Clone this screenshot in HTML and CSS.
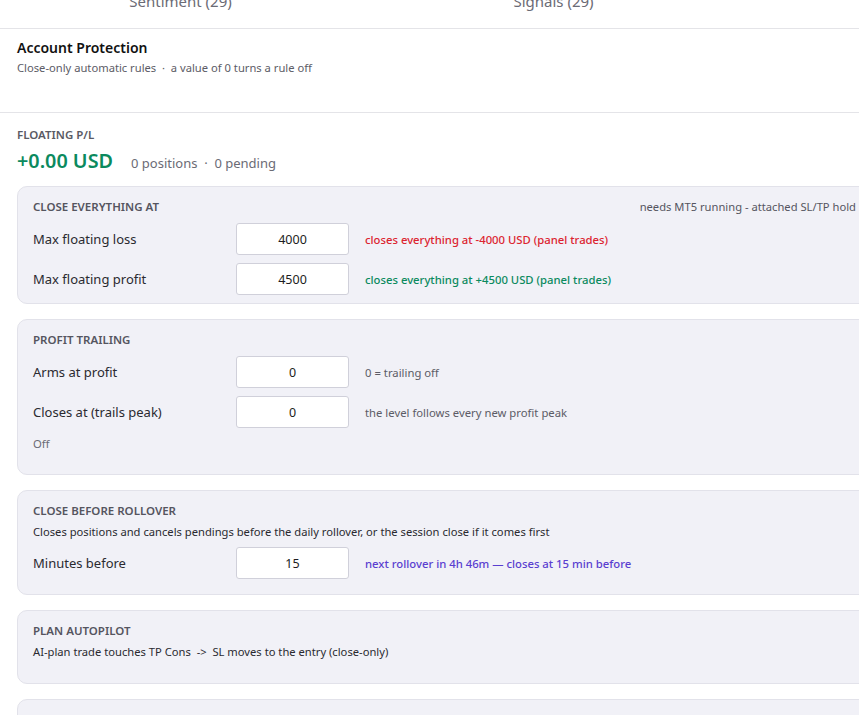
FILE: index.html
```html
<!DOCTYPE html>
<html lang="en">
<head>
	<meta charset="UTF-8">
	<title>Account Protection</title>
	<link rel="stylesheet" href="styles.css">
</head>
<body>
<div class="page">
	<div class="tabs">
		<span class="tab">Sentiment (29)</span>
		<span class="tab">Signals (29)</span>
	</div>

	<div class="head">
		<h2 class="head-tit">Account Protection</h2>
		<p class="head-sub">Close-only automatic rules &nbsp;&middot;&nbsp; a value of 0 turns a rule off</p>
	</div>

	<div class="body">
		<div class="lbl">FLOATING P/L</div>
		<div class="pl">
			<span class="pl-val">+0.00 USD</span>
			<span class="pl-meta">0 positions &nbsp;&middot;&nbsp; 0 pending</span>
		</div>

		<!-- close everything -->
		<div class="card">
			<div class="card-top">
				<h3 class="card-tit">CLOSE EVERYTHING AT</h3>
				<span class="card-note">needs MT5 running - attached SL/TP hold</span>
			</div>
			<div class="row">
				<span class="row-l">Max floating loss</span>
				<input class="num" type="text" value="4000">
				<span class="hint red">closes everything at -4000 USD (panel trades)</span>
			</div>
			<div class="row">
				<span class="row-l">Max floating profit</span>
				<input class="num" type="text" value="4500">
				<span class="hint green">closes everything at +4500 USD (panel trades)</span>
			</div>
		</div>

		<!-- trailing -->
		<div class="card">
			<div class="card-top">
				<h3 class="card-tit">PROFIT TRAILING</h3>
			</div>
			<div class="row">
				<span class="row-l">Arms at profit</span>
				<input class="num" type="text" value="0">
				<span class="hint">0 = trailing off</span>
			</div>
			<div class="row">
				<span class="row-l">Closes at (trails peak)</span>
				<input class="num" type="text" value="0">
				<span class="hint">the level follows every new profit peak</span>
			</div>
			<div class="state">Off</div>
		</div>

		<!-- rollover -->
		<div class="card card-roll">
			<div class="card-top tight">
				<h3 class="card-tit">CLOSE BEFORE ROLLOVER</h3>
			</div>
			<p class="desc">Closes positions and cancels pendings before the daily rollover, or the session close if it comes first</p>
			<div class="row">
				<span class="row-l">Minutes before</span>
				<input class="num" type="text" value="15">
				<span class="hint blue">next rollover in 4h 46m &mdash; closes at 15 min before</span>
			</div>
		</div>

		<!-- autopilot -->
		<div class="card card-auto">
			<div class="card-top tight">
				<h3 class="card-tit">PLAN AUTOPILOT</h3>
			</div>
			<p class="desc">AI-plan trade touches TP Cons &nbsp;-&gt; &nbsp;SL moves to the entry (close-only)</p>
		</div>

		<div class="card card-more"></div>
	</div>
</div>
</body>
</html>
```

FILE: styles.css
```css
body,h2,h3,p{
	margin: 0;
}
body{
	overflow: hidden;
	background-color: #fff;
	font-family: "Noto Sans", "Open Sans", sans-serif;
	color: #1d1d22;
}
.page{
	width: 876px;
}
.tabs{
	display: flex;
	margin: -12px 0 0 -6px;
	height: 40px;
	border-bottom: 1px solid #e4e4e8;
}
.tab{
	width: 373px;
	text-align: center;
	font-size: 15px;
	line-height: 26px;
	color: #6b6b75;
}
.head{
	height: 84px;
	padding: 9px 17px 0;
	box-sizing: border-box;
	border-bottom: 1px solid #e4e4e8;
}
.head-tit{
	font-size: 14px;
	line-height: 20px;
	font-weight: 600;
	color: #111;
}
.head-sub{
	margin-top: 2px;
	font-size: 11.2px;
	line-height: 16px;
	color: #5c5c66;
}
.body{
	padding: 14px 0 0 17px;
}
.lbl{
	font-size: 11.5px;
	line-height: 16px;
	font-weight: 600;
	color: #5a5a64;
}
.pl{
	display: flex;
	align-items: baseline;
	gap: 18px;
	margin: 5px 0 10px;
	line-height: 26px;
}
.pl-val{
	font-size: 19.8px;
	font-weight: 600;
	color: #0b8a5e;
}
.pl-meta{
	font-size: 13px;
	color: #6b6b75;
}
.card{
	padding: 13px 19px 0 15px;
	margin-bottom: 15px;
	border: 1px solid #e2e2ea;
	border-radius: 10px;
	background-color: #f1f1f7;
}
.card-top{
	display: flex;
	justify-content: space-between;
	margin-bottom: 9px;
	line-height: 14px;
}
.card-top.tight{
	margin-bottom: 6px;
}
.card-tit{
	font-size: 11.5px;
	font-weight: 600;
	color: #55555f;
}
.card-note{
	font-size: 11.2px;
	color: #55555f;
}
.row{
	display: flex;
	align-items: center;
	height: 32px;
	margin-bottom: 8px;
}
.row-l{
	width: 203px;
	font-size: 13px;
	color: #2a2a30;
}
.num{
	width: 113px;
	height: 32px;
	box-sizing: border-box;
	border: 1px solid #d0d0da;
	border-radius: 3px;
	background-color: #fff;
	text-align: center;
	font-family: inherit;
	font-size: 12.5px;
	color: #1d1d22;
	padding: 0;
}
.hint{
	margin-left: 16px;
	font-size: 11.3px;
	color: #5c5c66;
}
.hint.red{
	color: #dc2430;
	font-weight: 500;
}
.hint.green{
	color: #0b8a5e;
	font-weight: 500;
}
.hint.blue{
	color: #5a3fd0;
	font-weight: 500;
}
.state{
	margin-bottom: 22px;
	font-size: 11.3px;
	line-height: 16px;
	color: #6b6b75;
}
.desc{
	margin-bottom: 7px;
	font-size: 11.2px;
	line-height: 16px;
	color: #2a2a30;
}
.card-roll{
	padding-bottom: 7px;
}
.card-auto .desc{
	margin-top: 2px;
	margin-bottom: 23px;
}
.card-more{
	height: 60px;
}
```
